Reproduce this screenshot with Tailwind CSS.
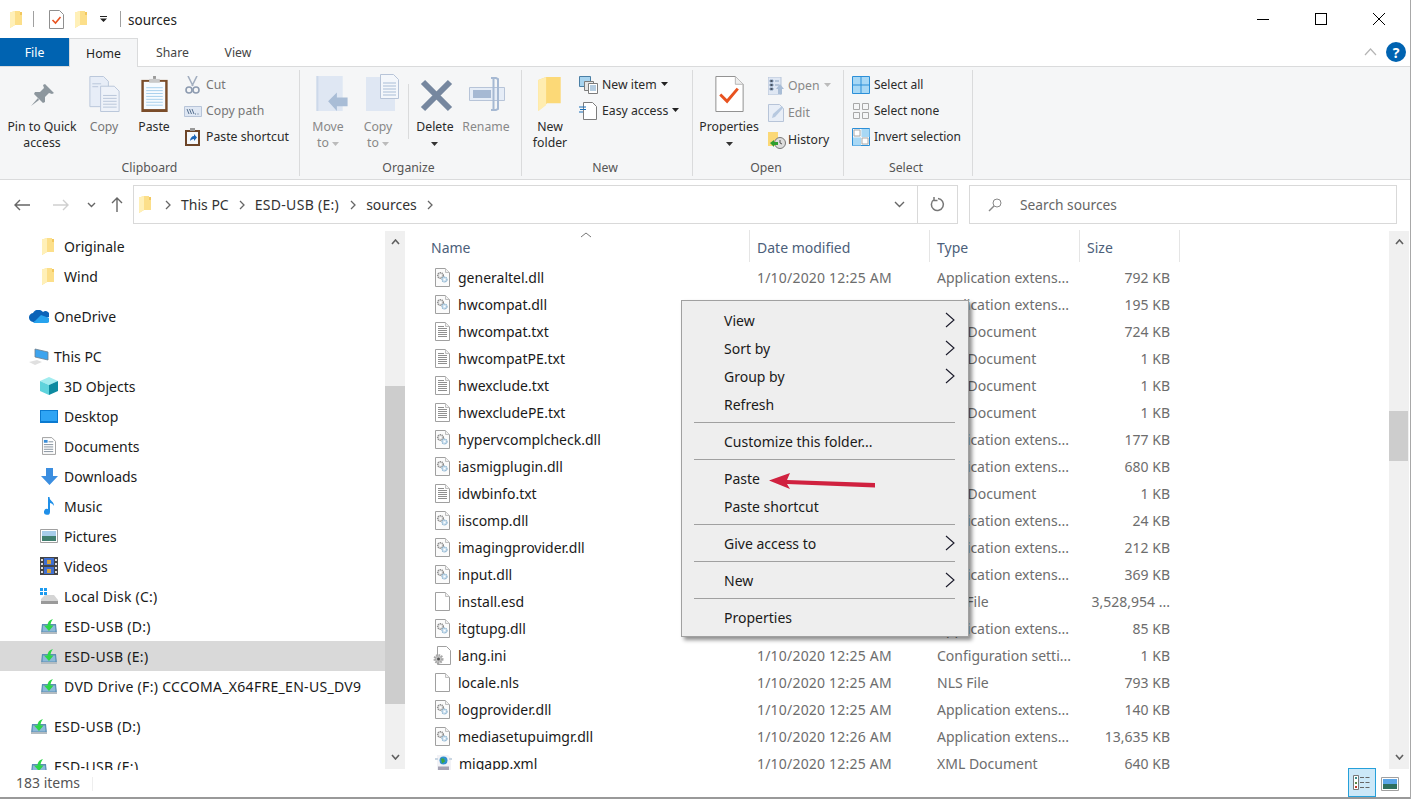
<!DOCTYPE html>
<html lang="en">
<head>
  <meta charset="UTF-8" />
  <title>sources</title>
  <script src="https://cdn.jsdelivr.net/npm/@tailwindcss/browser@4"></script>
</head>
<body class="bg-white overflow-hidden">
  <!-- shared icons -->
  <svg class="hidden">
    <symbol id="folder" viewBox="0 0 12 17"><path d="M0 1.500 5 0h5v1h2v13H5l-5 3z" fill="#fcdf8a"/><path d="M0 1.500 5 0v14l-5 3z" fill="#fff0b8"/><path d="M10 1h2v3h-2z" fill="#f2c75e"/></symbol>
    <symbol id="sheet" viewBox="0 0 15 19"><path d="M.5.500h10l4 4v14H.5z" fill="#fff" stroke="#a0a0a0"/><path d="M10.500.5v4h4" fill="#f0f0f0" stroke="#c0c0c0"/></symbol>
    <symbol id="dll" viewBox="0 0 15 19"><path d="M.5.500h10l4 4v14H.5z" fill="#fbfbfb" stroke="#a0a0a0"/><path d="M10.500.5v4h4" fill="#f0f0f0" stroke="#c0c0c0"/><circle cx="5.500" cy="7.500" r="2.800" fill="#e6e6e6" stroke="#8d8d8d" stroke-width="1.500" stroke-dasharray="1.300 .7"/><circle cx="5.500" cy="7.500" r="1" fill="#fff"/><circle cx="9.500" cy="11.500" r="2.500" fill="#d5e6f3" stroke="#86afcc" stroke-width="1.200" stroke-dasharray="1.200 .6"/><circle cx="9.500" cy="11.500" r=".8" fill="#fff"/></symbol>
    <symbol id="txt" viewBox="0 0 15 19"><path d="M.5.500h10l4 4v14H.5z" fill="#fff" stroke="#a0a0a0"/><path d="M10.500.5v4h4" fill="#f0f0f0" stroke="#c0c0c0"/><path d="M3 4.500h6M3 6.500h9M3 8.500h9M3 10.500h9M3 12.500h9M3 14.500h9" stroke="#8f8f8f"/></symbol>
    <symbol id="ini" viewBox="0 0 18 20"><path d="M4.500.5h9l4 4v14h-13z" fill="#fff" stroke="#a0a0a0"/><circle cx="5.500" cy="13" r="3.800" fill="#c4c4c4" stroke="#a8a8a8" stroke-width="2.400" stroke-dasharray="1.500 1"/><circle cx="5.500" cy="13" r="1.500" fill="#555"/></symbol>
    <symbol id="xml" viewBox="0 0 17 17"><path d="M2 0h11l3 3v14H2z" fill="#f2f2f6"/><path d="M0 3h3v2H0zM14 3h3v2h-3z" fill="#c9d6e2"/><circle cx="8.500" cy="5.500" r="4" fill="#2f8fd0"/><path d="M6 3.500h3l1 3-3 2z" fill="#3da83b"/><path d="M3 11.500h11v4H3z" fill="#a5a2b4"/></symbol>
    <symbol id="usb" viewBox="0 0 16 15"><path d="M1 5h14l1 9H0z" fill="#5b8fb4"/><path d="M2 6.500h12l.5 6h-13z" fill="#8cb8d8"/><path d="M0 13h16v2H0z" fill="#b3bcc2"/><path d="M12 0C8.500 1 6.500 3 6.500 6.500H3l5 5.500 4.500-5.500H9.500C9.500 4 10.500 2 12 0z" fill="#2cd648"/></symbol>
    <symbol id="chev-r" viewBox="0 0 8 12"><path d="m2 2 4 4-4 4" fill="none" stroke="#666" stroke-width="1.300"/></symbol>
    <symbol id="menu-chev" viewBox="0 0 10 16"><path d="m1 1 8 7-8 7" fill="none" stroke="#1a1a2a" stroke-width="1.100"/></symbol>
    <symbol id="caret" viewBox="0 0 7 4"><path d="M0 0h7L3.500 4z"/></symbol>
  </svg>

  <div class="relative w-[1411px] h-[799px] flex flex-col border-r border-r-[#a8a8a8] font-['Noto_Sans',sans-serif] text-[#1e1e1e] text-[13.5px] leading-[17px] overflow-hidden">

    <!-- title bar -->
    <div class="h-[38px] flex items-center shrink-0">
      <svg class="w-3 h-[17px] ml-[10px]"><use href="#folder"/></svg>
      <div class="w-px h-[16px] bg-[#a0a0a0] ml-[11px]"></div>
      <svg class="w-[15px] h-[19px] ml-[15px]" viewBox="0 0 15 19"><path d="M.5.500h10l4 4v14H.5z" fill="#fff" stroke="#8f8f8f"/><path d="m3.500 10 3 3 5-6" fill="none" stroke="#e8521f" stroke-width="1.600"/></svg>
      <svg class="w-3 h-[17px] ml-[11px]"><use href="#folder"/></svg>
      <svg class="w-[7px] h-[6px] ml-[13px]" viewBox="0 0 7 6"><path d="M0 0h7v1H0zM0 2.500h7L3.500 6z" fill="#222"/></svg>
      <div class="w-px h-[16px] bg-[#a0a0a0] ml-[13px]"></div>
      <span class="ml-[7px] mt-[2px] text-[13.5px] text-[#222]">sources</span>
      <div class="ml-auto flex items-center mr-[25px] gap-[46px]">
        <div class="w-3 h-px bg-black"></div>
        <div class="w-3 h-3 border border-black"></div>
        <svg class="w-3 h-3" viewBox="0 0 12 12"><path d="m0 0 12 12M12 0 0 12" stroke="#000"/></svg>
      </div>
    </div>

    <!-- tabs -->
    <div class="h-[29px] flex items-stretch shrink-0 border-b border-b-[#dadbdc] text-[12.25px] relative">
      <div class="w-[69px] h-[28px] bg-[#0063b1] text-white flex items-center justify-center">File</div>
      <div class="w-[69px] h-[29px] bg-[#f5f6f7] border-x border-t border-[#dadbdc] flex items-center justify-center">Home</div>
      <div class="w-[69px] h-[28px] flex items-center justify-center text-[#444]">Share</div>
      <div class="w-[62px] h-[28px] flex items-center justify-center text-[#444]">View</div>
      <div class="ml-auto flex items-center gap-[9px] mr-[4px]">
        <svg class="w-[13px] h-[8px]" viewBox="0 0 13 8"><path d="m1 7 5.500-6L12 7" fill="none" stroke="#b5b5b5" stroke-width="1.200"/></svg>
        <div class="w-5 h-5 rounded-full bg-[#0063b1] text-white font-bold text-[14px] flex items-center justify-center">?</div>
      </div>
    </div>

    <!-- ribbon -->
    <div class="h-[113px] shrink-0 flex bg-[#f5f6f7] border-b border-b-[#dadbdc] text-[12.25px] leading-[16px] text-[#2a2a2a]">

      <!-- clipboard -->
      <div class="w-[300px] flex flex-col border-r border-r-[#dadbdc] my-[3px]">
        <div class="flex-1 flex pt-[6px]">
          <div class="w-[84px] flex flex-col items-center">
            <div class="h-[36px] flex items-center">
              <svg class="w-7 h-[28px] mt-[3px]" viewBox="0 0 28 28"><path d="M17 2l9 9-2 1-3-1-4 4 0 5-2 1-9-9 1-2h5l4-4-1-3z" fill="#8d979e"/><path d="m10 16-7 8 8-6z" fill="#8d979e"/></svg>
            </div>
            <div class="mt-[7px] text-center">Pin to Quick<br>access</div>
          </div>
          <div class="w-[40px] flex flex-col items-center text-[#777]">
            <div class="h-[36px] flex items-center">
              <svg class="w-[31px] h-[36px]" viewBox="0 0 31 37"><path d="M.5.500h14l5 5v26H.5z" fill="#e7edf7" stroke="#b9c6da"/><path d="M11.500 10.500h14l5 5v21h-19z" fill="#eef2f9" stroke="#b9c6da"/><path d="M14 20h14M14 23h14M14 26h14M14 29h14M14 32h14M3 8h9M3 11h6" stroke="#b9c6da"/></svg>
            </div>
            <div class="mt-[7px]">Copy</div>
          </div>
          <div class="w-[60px] flex flex-col items-center">
            <div class="h-[36px] flex items-center">
              <svg class="w-[27px] h-[36px]" viewBox="0 0 27 37"><path d="M0 4h27v33H0z" fill="#7b4d2a"/><path d="M2.500 6h22v28h-22z" fill="#f6fbff"/><path d="M5 12h17M5 15h17M5 18h17M5 21h17M5 24h17M5 27h17M5 30h17" stroke="#a9d0ec"/><path d="M8 3h11v4H8z" fill="#c9c9c9"/><path d="M12 0h3v3h-3z" fill="#9a9a9a"/></svg>
            </div>
            <div class="mt-[7px]">Paste</div>
          </div>
          <div class="flex flex-col gap-[8px] ml-[1px]">
            <div class="h-[18px] flex items-center gap-[6px] text-[#777]">
              <svg class="w-[15px] h-[18px]" viewBox="0 0 15 18"><path d="m3 0 5 10M12 0 7 10" stroke="#a3afc0" stroke-width="1.600"/><circle cx="4" cy="14" r="3" fill="none" stroke="#8d9bb0" stroke-width="1.600"/><circle cx="11" cy="14" r="3" fill="none" stroke="#8d9bb0" stroke-width="1.600"/></svg>
              <span>Cut</span>
            </div>
            <div class="h-[18px] flex items-center gap-[4px] -ml-[1px] text-[#777]">
              <svg class="w-[18px] h-[11px]" viewBox="0 0 18 11"><path d="M.5.500h17v10H.5z" fill="#dfe7f3" stroke="#b7c4d8"/><path d="m3 3 2 5M5.500 3l2 5M8 3l2 5M11 8h1M13.500 8h1" stroke="#56708f"/></svg>
              <span>Copy path</span>
            </div>
            <div class="h-[18px] flex items-center gap-[6px]">
              <svg class="w-[15px] h-[18px]" viewBox="0 0 15 18"><path d="M0 2h15v16H0z" fill="#6d4528"/><path d="M2 4h11v12H2z" fill="#f5f8fb"/><path d="M5 0h5v3H5z" fill="#999"/><path d="M5 13c0-3 2-5 4-5V6l3 3.500L9 13v-2c-2 0-3 1-4 2z" fill="#1c66b8"/></svg>
              <span>Paste shortcut</span>
            </div>
          </div>
        </div>
        <div class="h-[16px] text-center text-[#555]">Clipboard</div>
      </div>

      <!-- organize -->
      <div class="w-[222px] flex flex-col border-r border-r-[#dadbdc] my-[3px]">
        <div class="flex-1 flex pt-[6px] text-[#888]">
          <div class="w-[50px] ml-[3px] flex flex-col items-center">
            <div class="h-[36px] flex items-center">
              <svg class="w-[33px] h-[36px] ml-[8px]" viewBox="0 0 33 37"><path d="M0 0h27v36H0z" fill="#dfe7f3"/><path d="M0 0h2v36H0z" fill="#cdd9ea"/><path d="m12 26 9-9v5h11v9H21v5z" fill="#a9bdd6"/></svg>
            </div>
            <div class="mt-[7px] text-center">Move<br>to <svg class="inline w-[7px] h-1 align-middle fill-[#bbb]"><use href="#caret"/></svg></div>
          </div>
          <div class="w-[50px] flex flex-col items-center">
            <div class="h-[36px] flex items-center">
              <svg class="w-[33px] h-[38px] -mt-[2px] ml-[9px]" viewBox="0 0 33 38"><path d="M0 3h29v34H0z" fill="#dfe7f3"/><path d="M14.500.5h13l5 5v19h-18z" fill="#f4f7fb" stroke="#b7c4d8"/><path d="M17 9h13M17 12h13M17 15h13M17 18h13M17 21h13" stroke="#a9bdd6"/></svg>
            </div>
            <div class="mt-[7px] text-center">Copy<br>to <svg class="inline w-[7px] h-1 align-middle fill-[#bbb]"><use href="#caret"/></svg></div>
          </div>
          <div class="w-px h-[55px] bg-[#dadbdc] ml-[5px] mt-[8px]"></div>
          <div class="w-[52px] flex flex-col items-center text-[#2a2a2a]">
            <div class="h-[36px] flex items-center">
              <svg class="w-[33px] h-[33px] mt-[2px] ml-[3px]" viewBox="0 0 33 33"><path d="m3 3 27 27M30 3 3 30" stroke="#76879f" stroke-width="6"/></svg>
            </div>
            <div class="mt-[7px] text-center">Delete<br><svg class="inline w-[7px] h-1 align-middle fill-[#333]"><use href="#caret"/></svg></div>
          </div>
          <div class="w-[50px] flex flex-col items-center">
            <div class="h-[36px] flex items-center">
              <svg class="w-[36px] h-[34px] ml-[2px]" viewBox="0 0 36 34"><path d="M.5 10.500h35v13H.5z" fill="#e6edf7" stroke="#b7c4d8"/><path d="M4 13h18v8H4z" fill="#a6b9d3"/><path d="M22 1h5l2 1v30l-2 1h-5m2.500-32v32" fill="none" stroke="#a6b9d3" stroke-width="2"/></svg>
            </div>
            <div class="mt-[7px] text-center">Rename</div>
          </div>
        </div>
        <div class="h-[16px] text-center text-[#555] pr-[4px]">Organize</div>
      </div>

      <!-- new -->
      <div class="w-[171px] flex flex-col border-r border-r-[#dadbdc] my-[3px]">
        <div class="flex-1 flex pt-[6px]">
          <div class="w-[56px] flex flex-col items-center">
            <div class="h-[36px] flex items-center">
              <svg class="w-[24px] h-[36px] mt-[1px]" viewBox="0 0 24 37"><path d="M0 3 8 0h15v27H9l-9 8z" fill="#fcd977"/><path d="M0 3 8 0v29l-8 6z" fill="#ffedb0"/></svg>
            </div>
            <div class="mt-[7px] text-center">New<br>folder</div>
          </div>
          <div class="flex flex-col gap-[8px] ml-[1px]">
            <div class="h-[18px] flex items-center gap-[4px]">
              <svg class="w-[19px] h-[18px]" viewBox="0 0 19 18"><path d="M.5.500h11v10H.5z" fill="#a8d4ef" stroke="#4a7fa5"/><path d="M5.500 5.500h9v9h-9z" fill="#e6e6e6" stroke="#7c7c7c"/><path d="M9.500 7.500h9v10h-9z" fill="#fff" stroke="#7c7c7c"/><path d="M11 10h6M11 12h6M11 14h6" stroke="#6a9bc4"/></svg>
              <span>New item <svg class="inline w-[7px] h-1 ml-[1px] mb-[3px] fill-[#222]"><use href="#caret"/></svg></span>
            </div>
            <div class="h-[18px] flex items-center gap-[4px]">
              <svg class="w-[19px] h-[18px]" viewBox="0 0 19 18"><path d="M4.500.5h9l4 4v13h-13z" fill="#fff" stroke="#7c7c7c"/><path d="M0 5h7M1 7.500h6M0 10h4" stroke="#1b6fb8"/></svg>
              <span>Easy access <svg class="inline w-[7px] h-1 ml-[1px] mb-[3px] fill-[#222]"><use href="#caret"/></svg></span>
            </div>
          </div>
        </div>
        <div class="h-[16px] text-center text-[#555] pr-[4px]">New</div>
      </div>

      <!-- open -->
      <div class="w-[151px] flex flex-col border-r border-r-[#dadbdc] my-[3px]">
        <div class="flex-1 flex pt-[6px]">
          <div class="w-[72px] flex flex-col items-center">
            <div class="h-[36px] flex items-center">
              <svg class="w-[29px] h-[36px]" viewBox="0 0 29 37"><path d="M.5.500h20l8 8v28H.5z" fill="#fff" stroke="#8f8f8f"/><path d="M20.500.5v8h8" fill="#eee" stroke="#b5b5b5"/><path d="m5 19 7 7 11-13" fill="none" stroke="#e8521f" stroke-width="3"/></svg>
            </div>
            <div class="mt-[7px] text-center">Properties<br><svg class="inline w-[7px] h-1 align-middle fill-[#333]"><use href="#caret"/></svg></div>
          </div>
          <div class="flex flex-col gap-[9px] mt-[1px] ml-[3px]">
            <div class="h-[18px] flex items-center gap-[4px] text-[#888]">
              <svg class="w-[16px] h-[18px]" viewBox="0 0 16 18"><path d="M0 0h13v18H0z" fill="#dfe7f3" stroke="#b7c4d8"/><path d="M2 3h3v2H2zM2 7h3v2H2zM2 11h3v2H2zM7 4h4M7 8h4" stroke="#8da3c0"/><path d="m12 7 4 5h-2v5h-4v-5H8z" fill="#a9bdd6"/></svg>
              <span>Open <svg class="inline w-[7px] h-1 ml-[1px] mb-[3px] fill-[#bbb]"><use href="#caret"/></svg></span>
            </div>
            <div class="h-[18px] flex items-center gap-[4px] text-[#888]">
              <svg class="w-[16px] h-[18px]" viewBox="0 0 16 18"><path d="M.5.500h11l4 4v13H.5z" fill="#e8eef7" stroke="#b7c4d8"/><path d="m4 14 1-4 9-8 1 2-8 9z" fill="#b7c9e0"/></svg>
              <span>Edit</span>
            </div>
            <div class="h-[18px] flex items-center gap-[4px]">
              <svg class="w-[18px] h-[18px] -mr-[2px]" viewBox="0 0 18 18"><path d="M0 1h10v14H0z" fill="#fbd876"/><circle cx="12" cy="12" r="5.500" fill="#ddd" stroke="#777"/><path d="M12 9v3l2 1" fill="none" stroke="#555"/><path d="m2 12 4-3v2h4v3H6v2z" fill="#2f9e2f"/></svg>
              <span>History</span>
            </div>
          </div>
        </div>
        <div class="h-[16px] text-center text-[#555] pr-[4px]">Open</div>
      </div>

      <!-- select -->
      <div class="w-[129px] flex flex-col border-r border-r-[#dadbdc] my-[3px] text-[12px]">
        <div class="flex-1 flex flex-col pt-[6px] pl-[8px] gap-[8px]">
          <div class="h-[18px] flex items-center gap-[4px]">
            <svg class="w-[18px] h-[18px]" viewBox="0 0 18 18"><path d="M.5.500h17v17H.5z" fill="#a8d8f5" stroke="#2b8fd8"/><path d="M9 0v18M0 9h18" stroke="#2b8fd8"/></svg>
            <span>Select all</span>
          </div>
          <div class="h-[18px] flex items-center gap-[4px]">
            <svg class="w-[18px] h-[18px]" viewBox="0 0 18 18"><path d="M1.500 1.500h6v6h-6zM10.500 1.500h6v6h-6zM1.500 10.500h6v6h-6zM10.500 10.500h6v6h-6z" fill="none" stroke="#a8a8a8"/></svg>
            <span>Select none</span>
          </div>
          <div class="h-[18px] flex items-center gap-[4px]">
            <svg class="w-[18px] h-[18px]" viewBox="0 0 18 18"><path d="M.5.500h17v17H.5z" fill="none" stroke="#2b8fd8"/><path d="M9.500 1h8v8h-8zM1 9.500h8v8H1z" fill="#a8d8f5"/><path d="M2 2h6v6H2zM10 10h6v6h-6z" fill="#fff" stroke="#aaa"/></svg>
            <span>Invert selection</span>
          </div>
        </div>
        <div class="h-[16px] text-center text-[#555] text-[12.25px] pr-[4px]">Select</div>
      </div>
    </div>

    <!-- address row -->
    <div class="h-[50px] shrink-0 flex items-center text-[14px] text-[#333] pb-[1px]">
      <svg class="w-[16px] h-[12px] ml-[14px]" viewBox="0 0 16 12"><path d="M16 6H1m5-5L1 6l5 5" fill="none" stroke="#666" stroke-width="1.400"/></svg>
      <svg class="w-[16px] h-[12px] ml-[23px]" viewBox="0 0 16 12"><path d="M0 6h15m-5-5 5 5-5 5" fill="none" stroke="#cfcfcf" stroke-width="1.400"/></svg>
      <svg class="w-[9px] h-[6px] ml-[18px]" viewBox="0 0 9 6"><path d="m1 1 3.500 3.500L8 1" fill="none" stroke="#666" stroke-width="1.400"/></svg>
      <svg class="w-[12px] h-[15px] ml-[15px]" viewBox="0 0 12 15"><path d="M6 15V1M1 6l5-5 5 5" fill="none" stroke="#666" stroke-width="1.400"/></svg>
      <div class="w-[825px] h-[39px] ml-[10px] border border-[#d9d9d9] flex items-center">
        <svg class="w-3 h-[17px] ml-[5px]"><use href="#folder"/></svg>
        <svg class="w-2 h-3 ml-[13px]"><use href="#chev-r"/></svg>
        <span class="ml-[9px]">This PC</span>
        <svg class="w-2 h-3 ml-[9px]"><use href="#chev-r"/></svg>
        <span class="ml-[9px] tracking-[0.3px]">ESD-USB (E:)</span>
        <svg class="w-2 h-3 ml-[10px]"><use href="#chev-r"/></svg>
        <span class="ml-[9px]">sources</span>
        <svg class="w-2 h-3 ml-[9px]"><use href="#chev-r"/></svg>
        <svg class="w-[11px] h-[7px] ml-auto mr-[12px]" viewBox="0 0 11 7"><path d="m1 1 4.500 4.500L10 1" fill="none" stroke="#666" stroke-width="1.400"/></svg>
        <div class="w-[40px] h-full border-l border-l-[#d9d9d9] flex items-center justify-center">
          <svg class="w-[15px] h-[15px]" viewBox="0 0 15 15"><path d="M4 2.500a6 6 0 1 0 4-1M4 0v3.500h3.500" fill="none" stroke="#777" stroke-width="1.500"/></svg>
        </div>
      </div>
      <div class="w-[428px] h-[39px] ml-[11px] border border-[#d9d9d9] flex items-center">
        <svg class="w-[14px] h-[14px] ml-[18px]" viewBox="0 0 14 14"><circle cx="9" cy="5" r="4" fill="none" stroke="#888"/><path d="m6 8-5 5" stroke="#888" stroke-width="1.400"/></svg>
        <span class="ml-[18px] text-[#666] text-[13.75px]">Search sources</span>
      </div>
    </div>

    <!-- main -->
    <div class="flex-1 min-h-0 flex">

      <!-- navigation pane -->
      <div class="w-[385px] shrink-0 text-[14px] text-[#1a1a1a] overflow-hidden pt-[1px]">
        <div class="h-[30px] flex items-center pl-[42px] gap-[10px]"><svg class="w-3 h-[17px]"><use href="#folder"/></svg>Originale</div>
        <div class="h-[30px] flex items-center pl-[42px] gap-[10px]"><svg class="w-3 h-[17px]"><use href="#folder"/></svg>Wind</div>
        <div class="h-[30px] mt-[10px] flex items-center pl-[29px] gap-[5px]">
          <svg class="w-[20px] h-[13px]" viewBox="0 0 20 13"><path d="M5 12a4.500 4.500 0 0 1-1-9 6 6 0 0 1 10-1 4 4 0 0 1 6 5z" fill="#0a63b8"/><path d="M4 13h14a3 3 0 0 0 2-5l-8-3-4 4z" fill="#27a3ee"/></svg>OneDrive</div>
        <div class="h-[30px] mt-[10px] flex items-center pl-[29px] gap-[5px]">
          <svg class="w-[20px] h-[17px]" viewBox="0 0 20 17"><path d="M6 1l13 3v8l-13-3z" fill="#3da4ee" stroke="#6f7f8c" stroke-width=".8"/><path d="M0 14l8-2 5 2-7 3z" fill="#e0e0e0"/></svg>This PC</div>
        <div class="h-[30px] flex items-center pl-[40px] gap-[6px]">
          <svg class="w-[18px] h-[18px]" viewBox="0 0 18 18"><path d="M9 0l9 4-9 4-9-4z" fill="#a2ecef"/><path d="M0 4l9 4v10l-9-4z" fill="#5fd3dc"/><path d="M18 4 9 8v10l9-4z" fill="#0d8aa0"/></svg>3D Objects</div>
        <div class="h-[30px] flex items-center pl-[40px] gap-[6px]">
          <svg class="w-[18px] h-[13px]" viewBox="0 0 18 13"><path d="M0 0h18v13H0z" fill="#0a7ad0"/><path d="M1 1h16v10H1z" fill="#2ea4f4"/></svg>Desktop</div>
        <div class="h-[30px] flex items-center pl-[42px] gap-[8px]">
          <svg class="w-[14px] h-[18px]" viewBox="0 0 15 19"><path d="M.5.500h10l4 4v14H.5z" fill="#fff" stroke="#9a9a9a"/><path d="M2 3h4v3H2z" fill="#3a8ed8"/><path d="M7 5h5M2 8h10M2 10.500h10M2 13h10M2 15.500h10" stroke="#7f8c99"/></svg>Documents</div>
        <div class="h-[30px] flex items-center pl-[41px] gap-[6px]">
          <svg class="w-[17px] h-[17px]" viewBox="0 0 17 17"><path d="M5 0h7v8h5l-8.500 9L0 8h5z" fill="#3b8ee0"/></svg>Downloads</div>
        <div class="h-[30px] flex items-center pl-[44px] gap-[10px]">
          <svg class="w-[10px] h-[18px]" viewBox="0 0 10 18"><path d="M4 0h1.500c0 4 4.500 4 4.500 9-1-2-3-3-4-3v9a3 3 0 1 1-2-3z" fill="#1f8fe8"/></svg>Music</div>
        <div class="h-[30px] flex items-center pl-[40px] gap-[6px]">
          <svg class="w-[18px] h-[14px]" viewBox="0 0 18 14"><path d="M.5.500h17v13H.5z" fill="#fff" stroke="#a0a0a0"/><path d="M2 2h14v5H2z" fill="#a7cdea"/><path d="M2 7h14v5H2z" fill="#3f7f6f"/></svg>Pictures</div>
        <div class="h-[30px] flex items-center pl-[40px] gap-[6px]">
          <svg class="w-[18px] h-[18px]" viewBox="0 0 18 18"><path d="M0 0h18v18H0z" fill="#444"/><path d="M4 1h10v7H4z" fill="#3f6fd0"/><path d="M4 10h10v7H4z" fill="#3f6fd0"/><path d="M7 3h4v4H7zM7 12h4v4H7z" fill="#d6a23a"/><path d="M1 2h2v2H1zM1 6h2v2H1zM1 10h2v2H1zM1 14h2v2H1zM15 2h2v2h-2zM15 6h2v2h-2zM15 10h2v2h-2zM15 14h2v2h-2z" fill="#ddd"/></svg>Videos</div>
        <div class="h-[30px] flex items-center pl-[39px] gap-[6px] tracking-[0.2px]">
          <svg class="w-[19px] h-[16px]" viewBox="0 0 19 16"><path d="M1 0h3v3H1zM5 0h3v3H5zM1 4h3v3H1zM5 4h3v3H5z" fill="#1d9bf0"/><path d="M2 11l4-4h9l4 5v3H2z" fill="#d5d5d5"/><path d="M2 13h17v3H2z" fill="#9a9a9a"/></svg>Local Disk (C:)</div>
        <div class="h-[30px] flex items-center pl-[41px] gap-[7px] tracking-[0.3px]"><svg class="w-4 h-[15px]"><use href="#usb"/></svg>ESD-USB (D:)</div>
        <div class="h-[30px] flex items-center pl-[41px] gap-[7px] tracking-[0.3px] bg-[#d9d9d9]"><svg class="w-4 h-[15px]"><use href="#usb"/></svg>ESD-USB (E:)</div>
        <div class="h-[30px] flex items-center pl-[41px] gap-[7px] tracking-[0.3px]"><svg class="w-4 h-[15px]"><use href="#usb"/></svg>DVD Drive (F:) CCCOMA_X64FRE_EN-US_DV9</div>
        <div class="h-[30px] mt-[10px] flex items-center pl-[31px] gap-[7px] tracking-[0.3px]"><svg class="w-4 h-[15px]"><use href="#usb"/></svg>ESD-USB (D:)</div>
        <div class="h-[30px] mt-[10px] flex items-center pl-[31px] gap-[7px] tracking-[0.3px]"><svg class="w-4 h-[15px]"><use href="#usb"/></svg>ESD-USB (E:)</div>
      </div>

      <!-- navigation scrollbar -->
      <div class="w-[20px] shrink-0 bg-[#f0f0f0] flex flex-col items-center h-[538px] mt-[1px]">
        <svg class="w-[9px] h-[6px] mt-[8px]" viewBox="0 0 9 6"><path d="m1 5 3.500-4L8 5" fill="none" stroke="#606060" stroke-width="1.600"/></svg>
        <div class="w-full h-[318px] bg-[#cdcdcd] mt-[141px]"></div>
        <svg class="w-[9px] h-[6px] mt-[50px]" viewBox="0 0 9 6"><path d="m1 1 3.500 4L8 1" fill="none" stroke="#606060" stroke-width="1.600"/></svg>
      </div>

      <!-- details -->
      <div class="flex-1 min-w-0 flex flex-col text-[14px] overflow-hidden h-[540px] pl-[25px]">
        <div class="h-[32px] shrink-0 flex items-center text-[#4c607a] relative">
          <svg class="absolute left-[150px] top-[2px] w-[12px] h-[6px]" viewBox="0 0 12 6"><path d="m1 5 5-4 5 4" fill="none" stroke="#777"/></svg>
          <div class="w-[320px] h-full flex items-center pl-[1px] pt-[3px] border-r border-r-[#e5e5e5]">Name</div>
          <div class="w-[180px] h-full flex items-center pl-[7px] pt-[3px] border-r border-r-[#e5e5e5]">Date modified</div>
          <div class="w-[150px] h-full flex items-center pl-[7px] pt-[3px] border-r border-r-[#e5e5e5]">Type</div>
          <div class="w-[100px] h-full flex items-center pl-[7px] pt-[3px] border-r border-r-[#e5e5e5]">Size</div>
        </div>
        <div class="text-[#6d6d6d] pt-[2px]">
          <div class="h-[27px] flex items-center"><div class="w-[320px] flex items-center gap-[8px] pl-[5px] text-[#1a1a1a]"><svg class="w-[15px] h-[19px]"><use href="#dll"/></svg>generaltel.dll</div><div class="w-[180px] pl-[7px] tracking-[0.2px]">1/10/2020 12:25 AM</div><div class="w-[150px] pl-[7px]">Application extens...</div><div class="w-[90px] text-right">792 KB</div></div>
          <div class="h-[27px] flex items-center"><div class="w-[320px] flex items-center gap-[8px] pl-[5px] text-[#1a1a1a]"><svg class="w-[15px] h-[19px]"><use href="#dll"/></svg>hwcompat.dll</div><div class="w-[180px] pl-[7px] tracking-[0.2px]">1/10/2020 12:25 AM</div><div class="w-[150px] pl-[7px]">Application extens...</div><div class="w-[90px] text-right">195 KB</div></div>
          <div class="h-[27px] flex items-center"><div class="w-[320px] flex items-center gap-[8px] pl-[5px] text-[#1a1a1a]"><svg class="w-[15px] h-[19px]"><use href="#txt"/></svg>hwcompat.txt</div><div class="w-[180px] pl-[7px] tracking-[0.2px]">1/10/2020 12:25 AM</div><div class="w-[150px] pl-[7px]">Text Document</div><div class="w-[90px] text-right">724 KB</div></div>
          <div class="h-[27px] flex items-center"><div class="w-[320px] flex items-center gap-[8px] pl-[5px] text-[#1a1a1a]"><svg class="w-[15px] h-[19px]"><use href="#txt"/></svg>hwcompatPE.txt</div><div class="w-[180px] pl-[7px] tracking-[0.2px]">1/10/2020 12:25 AM</div><div class="w-[150px] pl-[7px]">Text Document</div><div class="w-[90px] text-right">1 KB</div></div>
          <div class="h-[27px] flex items-center"><div class="w-[320px] flex items-center gap-[8px] pl-[5px] text-[#1a1a1a]"><svg class="w-[15px] h-[19px]"><use href="#txt"/></svg>hwexclude.txt</div><div class="w-[180px] pl-[7px] tracking-[0.2px]">1/10/2020 12:25 AM</div><div class="w-[150px] pl-[7px]">Text Document</div><div class="w-[90px] text-right">1 KB</div></div>
          <div class="h-[27px] flex items-center"><div class="w-[320px] flex items-center gap-[8px] pl-[5px] text-[#1a1a1a]"><svg class="w-[15px] h-[19px]"><use href="#txt"/></svg>hwexcludePE.txt</div><div class="w-[180px] pl-[7px] tracking-[0.2px]">1/10/2020 12:25 AM</div><div class="w-[150px] pl-[7px]">Text Document</div><div class="w-[90px] text-right">1 KB</div></div>
          <div class="h-[27px] flex items-center"><div class="w-[320px] flex items-center gap-[8px] pl-[5px] text-[#1a1a1a]"><svg class="w-[15px] h-[19px]"><use href="#dll"/></svg>hypervcomplcheck.dll</div><div class="w-[180px] pl-[7px] tracking-[0.2px]">1/10/2020 12:25 AM</div><div class="w-[150px] pl-[7px]">Application extens...</div><div class="w-[90px] text-right">177 KB</div></div>
          <div class="h-[27px] flex items-center"><div class="w-[320px] flex items-center gap-[8px] pl-[5px] text-[#1a1a1a]"><svg class="w-[15px] h-[19px]"><use href="#dll"/></svg>iasmigplugin.dll</div><div class="w-[180px] pl-[7px] tracking-[0.2px]">1/10/2020 12:25 AM</div><div class="w-[150px] pl-[7px]">Application extens...</div><div class="w-[90px] text-right">680 KB</div></div>
          <div class="h-[27px] flex items-center"><div class="w-[320px] flex items-center gap-[8px] pl-[5px] text-[#1a1a1a]"><svg class="w-[15px] h-[19px]"><use href="#txt"/></svg>idwbinfo.txt</div><div class="w-[180px] pl-[7px] tracking-[0.2px]">1/10/2020 12:25 AM</div><div class="w-[150px] pl-[7px]">Text Document</div><div class="w-[90px] text-right">1 KB</div></div>
          <div class="h-[27px] flex items-center"><div class="w-[320px] flex items-center gap-[8px] pl-[5px] text-[#1a1a1a]"><svg class="w-[15px] h-[19px]"><use href="#dll"/></svg>iiscomp.dll</div><div class="w-[180px] pl-[7px] tracking-[0.2px]">1/10/2020 12:25 AM</div><div class="w-[150px] pl-[7px]">Application extens...</div><div class="w-[90px] text-right">24 KB</div></div>
          <div class="h-[27px] flex items-center"><div class="w-[320px] flex items-center gap-[8px] pl-[5px] text-[#1a1a1a]"><svg class="w-[15px] h-[19px]"><use href="#dll"/></svg>imagingprovider.dll</div><div class="w-[180px] pl-[7px] tracking-[0.2px]">1/10/2020 12:25 AM</div><div class="w-[150px] pl-[7px]">Application extens...</div><div class="w-[90px] text-right">212 KB</div></div>
          <div class="h-[27px] flex items-center"><div class="w-[320px] flex items-center gap-[8px] pl-[5px] text-[#1a1a1a]"><svg class="w-[15px] h-[19px]"><use href="#dll"/></svg>input.dll</div><div class="w-[180px] pl-[7px] tracking-[0.2px]">1/10/2020 12:25 AM</div><div class="w-[150px] pl-[7px]">Application extens...</div><div class="w-[90px] text-right">369 KB</div></div>
          <div class="h-[27px] flex items-center"><div class="w-[320px] flex items-center gap-[8px] pl-[5px] text-[#1a1a1a]"><svg class="w-[15px] h-[19px]"><use href="#sheet"/></svg>install.esd</div><div class="w-[180px] pl-[7px] tracking-[0.2px]">1/10/2020 12:25 AM</div><div class="w-[150px] pl-[7px]">ESD File</div><div class="w-[90px] text-right">3,528,954 ...</div></div>
          <div class="h-[27px] flex items-center"><div class="w-[320px] flex items-center gap-[8px] pl-[5px] text-[#1a1a1a]"><svg class="w-[15px] h-[19px]"><use href="#dll"/></svg>itgtupg.dll</div><div class="w-[180px] pl-[7px] tracking-[0.2px]">1/10/2020 12:25 AM</div><div class="w-[150px] pl-[7px]">Application extens...</div><div class="w-[90px] text-right">85 KB</div></div>
          <div class="h-[27px] flex items-center"><div class="w-[320px] flex items-center gap-[7px] pl-[3px] text-[#1a1a1a]"><svg class="w-[18px] h-[20px]"><use href="#ini"/></svg>lang.ini</div><div class="w-[180px] pl-[7px] tracking-[0.2px]">1/10/2020 12:25 AM</div><div class="w-[150px] pl-[7px]">Configuration setti...</div><div class="w-[90px] text-right">1 KB</div></div>
          <div class="h-[27px] flex items-center"><div class="w-[320px] flex items-center gap-[8px] pl-[5px] text-[#1a1a1a]"><svg class="w-[15px] h-[19px]"><use href="#sheet"/></svg>locale.nls</div><div class="w-[180px] pl-[7px] tracking-[0.2px]">1/10/2020 12:25 AM</div><div class="w-[150px] pl-[7px]">NLS File</div><div class="w-[90px] text-right">793 KB</div></div>
          <div class="h-[27px] flex items-center"><div class="w-[320px] flex items-center gap-[8px] pl-[5px] text-[#1a1a1a]"><svg class="w-[15px] h-[19px]"><use href="#dll"/></svg>logprovider.dll</div><div class="w-[180px] pl-[7px] tracking-[0.2px]">1/10/2020 12:25 AM</div><div class="w-[150px] pl-[7px]">Application extens...</div><div class="w-[90px] text-right">140 KB</div></div>
          <div class="h-[27px] flex items-center"><div class="w-[320px] flex items-center gap-[8px] pl-[5px] text-[#1a1a1a]"><svg class="w-[15px] h-[19px]"><use href="#dll"/></svg>mediasetupuimgr.dll</div><div class="w-[180px] pl-[7px] tracking-[0.2px]">1/10/2020 12:26 AM</div><div class="w-[150px] pl-[7px]">Application extens...</div><div class="w-[90px] text-right">13,635 KB</div></div>
          <div class="h-[27px] flex items-center"><div class="w-[320px] flex items-center gap-[7px] pl-[5px] text-[#1a1a1a]"><svg class="w-[17px] h-[17px]"><use href="#xml"/></svg>migapp.xml</div><div class="w-[180px] pl-[7px] tracking-[0.2px]">1/10/2020 12:25 AM</div><div class="w-[150px] pl-[7px]">XML Document</div><div class="w-[90px] text-right">640 KB</div></div>
        </div>
      </div>

      <!-- list scrollbar -->
      <div class="w-[20px] shrink-0 bg-[#f0f0f0] flex flex-col items-center h-[538px] mt-[1px] mr-[1px]">
        <svg class="w-[9px] h-[6px] mt-[8px]" viewBox="0 0 9 6"><path d="m1 5 3.500-4L8 5" fill="none" stroke="#606060" stroke-width="1.600"/></svg>
        <div class="w-[19px] self-start h-[50px] bg-[#cdcdcd] mt-[166px]"></div>
        <svg class="w-[9px] h-[6px] mt-[293px]" viewBox="0 0 9 6"><path d="m1 1 3.500 4L8 1" fill="none" stroke="#606060" stroke-width="1.600"/></svg>
      </div>
    </div>

    <!-- status bar -->
    <div class="h-[29px] shrink-0 flex items-center border-b-2 border-b-[#999] text-[14px] text-[#555] bg-white relative z-10">
      <span class="ml-[16px] -mt-[2px]">183 items</span>
      <div class="w-px h-[14px] bg-[#eee] ml-[12px]"></div>
      <div class="ml-auto flex items-center mr-[11px] gap-[5px]">
        <div class="w-[28px] h-[29px] -mt-[2px] bg-[#cce8f8] border border-[#26a0da] flex items-center justify-center">
          <svg class="w-[18px] h-[15px]" viewBox="0 0 18 15"><path d="M.5.500h5v14h-5z" fill="#fff" stroke="#777"/><path d="M2 2h2v2H2z" fill="#3a8a8a"/><path d="M2 7h2v2H2z" fill="#5a8a4a"/><path d="M2 11h2v2H2z" fill="#c0392b"/><path d="M7 2.500h4M12.500 2.500h4M7 7.500h4M12.500 7.500h4M7 12.500h4M12.500 12.500h4" stroke="#666"/></svg>
        </div>
        <svg class="w-[18px] h-[14px]" viewBox="0 0 18 14"><path d="M.5.500h17v13H.5z" fill="#fff" stroke="#a0a0a0"/><path d="M2 2h14v5H2z" fill="#5aa5e8"/><path d="M2 7h14v5H2z" fill="#2f6f5f"/></svg>
      </div>
    </div>

    <!-- context menu -->
    <div class="absolute left-[681px] top-[300px] w-[288px] h-[337px] z-20 bg-[#eeeeee] border border-[#a0a0a0] shadow-[3px_3px_4px_rgba(0,0,0,0.45)] text-[14px] text-[#1a1a1a] pt-[5px]">
      <div class="h-[28px] flex items-center pl-[42px] pr-[13px] justify-between">View<svg class="w-[10px] h-[16px]"><use href="#menu-chev"/></svg></div>
      <div class="h-[28px] flex items-center pl-[42px] pr-[13px] justify-between">Sort by<svg class="w-[10px] h-[16px]"><use href="#menu-chev"/></svg></div>
      <div class="h-[28px] flex items-center pl-[42px] pr-[13px] justify-between">Group by<svg class="w-[10px] h-[16px]"><use href="#menu-chev"/></svg></div>
      <div class="h-[28px] flex items-center pl-[42px]">Refresh</div>
      <div class="h-px bg-[#a0a0a0] ml-[12px] mr-[13px] my-[4px]"></div>
      <div class="h-[28px] flex items-center pl-[42px]">Customize this folder...</div>
      <div class="h-px bg-[#a0a0a0] ml-[12px] mr-[13px] my-[4px]"></div>
      <div class="h-[28px] flex items-center pl-[42px]">Paste</div>
      <div class="h-[28px] flex items-center pl-[42px]">Paste shortcut</div>
      <div class="h-px bg-[#a0a0a0] ml-[12px] mr-[13px] my-[4px]"></div>
      <div class="h-[28px] flex items-center pl-[42px] pr-[13px] justify-between">Give access to<svg class="w-[10px] h-[16px]"><use href="#menu-chev"/></svg></div>
      <div class="h-px bg-[#a0a0a0] ml-[12px] mr-[13px] my-[4px]"></div>
      <div class="h-[28px] flex items-center pl-[42px] pr-[13px] justify-between">New<svg class="w-[10px] h-[16px]"><use href="#menu-chev"/></svg></div>
      <div class="h-px bg-[#a0a0a0] ml-[12px] mr-[13px] my-[4px]"></div>
      <div class="h-[28px] flex items-center pl-[42px]">Properties</div>
      <!-- annotation arrow -->
      <svg class="absolute left-[87px] top-[171px] w-[108px] h-[18px]" viewBox="0 0 108 18"><path d="M0 8.500 21 1l-3 7 88 3v4.500L18 12l3 5z" fill="#d0213f"/></svg>
    </div>
  </div>
</body>
</html>
